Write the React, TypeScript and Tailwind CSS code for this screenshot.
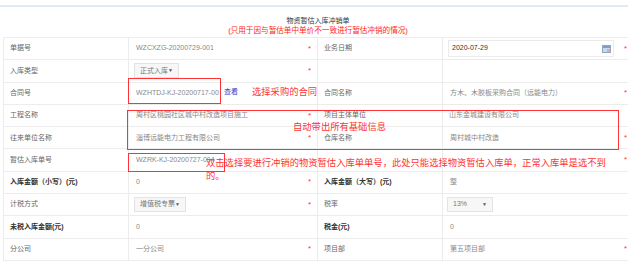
import type { ReactNode } from "react";

const LINE = "border-[#ececec]";

function Label({ children, bold = false }: { children?: ReactNode; bold?: boolean }) {
  return (
    <div
      className={`flex items-center border-b border-r ${LINE} pl-[6px] text-[7px] ${bold ? "font-bold text-[#333]" : "text-[#666]"}`}
    >
      {children}
    </div>
  );
}

function Value({ children, req = false, pad = "pl-[7px]" }: { children?: ReactNode; req?: boolean; pad?: string }) {
  return (
    <div className={`flex items-center justify-between border-b border-r ${LINE} ${pad} pr-[6px] text-[7px] text-[#888]`}>
      <div className="flex items-center">{children}</div>
      {req && <span className="text-[8px] leading-none text-[#f33]">*</span>}
    </div>
  );
}

function Select({ text, width }: { text: string; width: string }) {
  return (
    <div className={`flex h-[15px] ${width} items-center justify-between border border-[#e3e3e3] bg-[#f7f7f7] px-[5px] text-[7px] text-[#777]`}>
      <span>{text}</span>
      <span className="text-[5px] text-[#555]">▼</span>
    </div>
  );
}

function CalendarIcon() {
  return (
    <svg width="9" height="8" viewBox="0 0 9 8">
      <rect x="0.5" y="0.5" width="8" height="7" fill="#c9d9ec" stroke="#8ea6c4" />
      <rect x="1" y="1" width="7" height="2" fill="#7f9cc6" />
      <rect x="5" y="4" width="3" height="3" fill="#f2a49a" />
    </svg>
  );
}

export default function App() {
  return (
    <div className="relative h-[261px] w-[628px] overflow-hidden bg-white font-['Liberation_Sans','Noto_Sans_CJK_SC',sans-serif]">
      <div className="h-[5px]" />
      <div className="h-[2px] bg-[#e2e9f2]" />

      <div className="ml-[3px] w-[630px]">
        <div className="flex h-[30px] flex-col items-center justify-end pb-[1px]">
          <div className="text-[7px] leading-[10px] text-[#333]">物资暂估入库冲销单</div>
          <div className="text-[7.6px] leading-[10px] text-[#f22]">(只用于因与暂估单中单价不一致进行暂估冲销的情况)</div>
        </div>

        {/* form table */}
        <div className={`grid grid-cols-[125px_189px_125px_191px] auto-rows-[22.3px] border-l border-t ${LINE}`}>
          <Label>单据号</Label>
          <Value req>WZCXZG-20200729-001</Value>
          <Label>业务日期</Label>
          <Value req pad="pl-[5px]">
            <div className="flex h-[17px] w-[166px] items-center justify-between border border-[#ebebeb] bg-white pl-[3px] pr-[2px] text-[#333]">
              <span>2020-07-29</span>
              <CalendarIcon />
            </div>
          </Value>

          <Label>入库类型</Label>
          <Value req pad="pl-[5px]">
            <Select text="正式入库" width="w-[45px]" />
          </Value>
          <Label />
          <Value />

          <Label>合同号</Label>
          <Value>WZHTDJ-KJ-20200717-00</Value>
          <Label>合同名称</Label>
          <Value req>方木、木胶板采购合同（远能电力）</Value>

          <Label>工程名称</Label>
          <Value req>周村区桃园社区城中村改造项目施工</Value>
          <Label>项目主体单位</Label>
          <Value pad="pl-[6px]">山东金城建设有限公司</Value>

          <Label>往来单位名称</Label>
          <Value req>淄博远能电力工程有限公司</Value>
          <Label>仓库名称</Label>
          <Value req>周村城中村改造</Value>

          <Label>暂估入库单号</Label>
          <Value>WZRK-KJ-20200727-004</Value>
          <Label />
          <Value req />

          <Label bold>入库金额（小写）(元)</Label>
          <Value req>0</Value>
          <Label bold>入库金额（大写）(元)</Label>
          <Value>整</Value>

          <Label>计税方式</Label>
          <Value req pad="pl-[5px]">
            <Select text="增值税专票" width="w-[52px]" />
          </Value>
          <Label>税率</Label>
          <Value pad="pl-[4px]">
            <Select text="13%" width="w-[46px]" />
          </Value>

          <Label bold>未税入库金额(元)</Label>
          <Value>0</Value>
          <Label bold>税金(元)</Label>
          <Value>0</Value>

          <Label>分公司</Label>
          <Value req>一分公司</Value>
          <Label>项目部</Label>
          <Value req>第五项目部</Value>
        </div>
      </div>

      {/* annotations laid over the form */}
      <div className="absolute left-[128px] top-[78px] h-[26px] w-[93px] border-[1.5px] border-[#f33]" />
      <span className="absolute left-[224px] top-[87px] text-[7px] leading-[10px] text-[#3a3ac8]">查看</span>
      <span className="absolute left-[252px] top-[86px] text-[9.3px] leading-[12px] text-[#f33]">选择采购的合同</span>

      <div className="absolute left-[127px] top-[110px] h-[40px] w-[492px] border-[1.5px] border-[#f33]" />
      <span className="absolute left-[293px] top-[121px] text-[9.3px] leading-[12px] text-[#f33]">自动带出所有基础信息</span>

      <div className="absolute left-[128px] top-[153px] h-[19px] w-[97px] border-[1.5px] border-[#f33]" />
      <div className="absolute left-[206px] top-[157px] text-[9.3px] leading-[12.5px] text-[#f33]">
        <div>双击选择要进行冲销的物资暂估入库单单号，此处只能选择物资暂估入库单，正常入库单是选不到</div>
        <div>的。</div>
      </div>
    </div>
  );
}
